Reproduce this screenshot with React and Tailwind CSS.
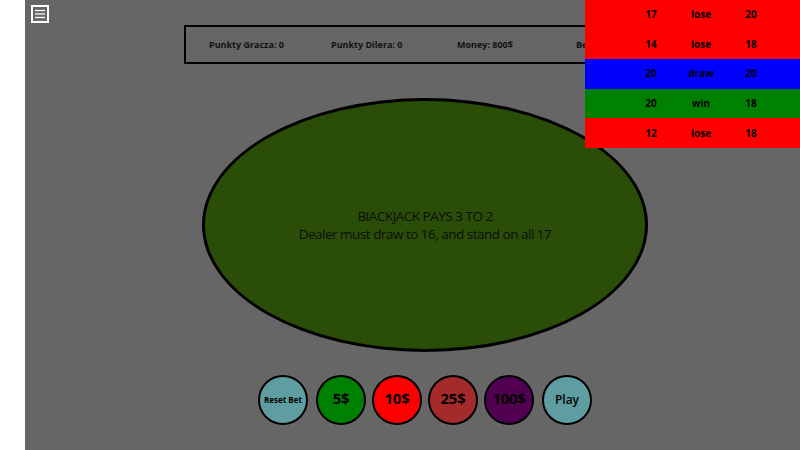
import React from "react";

const history = [
  { p: 17, r: "lose", d: 20, bg: "bg-[#ff0000]" },
  { p: 14, r: "lose", d: 18, bg: "bg-[#ff0000]" },
  { p: 20, r: "draw", d: 20, bg: "bg-[#0000ff]" },
  { p: 20, r: "win", d: 18, bg: "bg-[#008000]" },
  { p: 12, r: "lose", d: 18, bg: "bg-[#ff0000]" },
];

const chips = [
  { label: "5$", bg: "bg-[#008000]" },
  { label: "10$", bg: "bg-[#ff0000]" },
  { label: "25$", bg: "bg-[#a52a2a]" },
  { label: "100$", bg: "bg-[#520052]" },
];

const App = () => {
  return (
    <div
      className="flex w-[800px] h-[450px] overflow-hidden bg-white"
      style={{ fontFamily: '"Open Sans", "Noto Sans", sans-serif' }}
    >
      <div className="w-[25px] shrink-0 bg-white" />

      <main className="relative flex-1 h-full bg-[#666666]">
        {/* Menu */}
        <div className="pt-[5px] pl-[6px]">
          <svg width="18" height="18" viewBox="0 0 18 18">
            <rect x="1" y="1" width="16" height="16" fill="none" stroke="#fff" strokeWidth="2" />
            <line x1="4" y1="5.5" x2="14" y2="5.5" stroke="#fff" strokeWidth="1.3" />
            <line x1="4" y1="9" x2="14" y2="9" stroke="#fff" strokeWidth="1.3" />
            <line x1="4" y1="12.5" x2="14" y2="12.5" stroke="#fff" strokeWidth="1.3" />
          </svg>
        </div>

        <div className="flex flex-col items-center pl-[25px]">
          {/* Score bar */}
          <div className="mt-[2px] w-[482px] h-[39px] border-2 border-black flex items-center pl-[23px] text-[9px] font-bold text-[#111] whitespace-nowrap">
            <span className="w-[122px]">Punkty Gracza: 0</span>
            <span className="w-[126px]">Punkty Dilera: 0</span>
            <span className="w-[119px]">Money: 800$</span>
            <span>Bet: 0$</span>
          </div>

          {/* Table */}
          <div className="mt-[34px] w-[446px] h-[254px] rounded-[50%] border-[3px] border-black bg-[#2a4d07] flex flex-col items-center justify-center text-[13.5px] leading-[18px] tracking-[-0.5px] text-[#0d0d0d]">
            <span>BIACKJACK PAYS 3 TO 2</span>
            <span>Dealer must draw to 16, and stand on all 17</span>
          </div>

          {/* Chips */}
          <div className="mt-[23px] flex items-center">
            <button className="w-[50px] h-[50px] rounded-full border-2 border-black bg-[#5f9ea0] text-[8px] font-bold text-black">
              Reset Bet
            </button>
            <div className="ml-[8px] flex gap-[6px]">
              {chips.map((c) => (
                <button
                  key={c.label}
                  className={`w-[50px] h-[50px] pb-[3px] rounded-full border-2 border-black ${c.bg} text-[15px] font-bold tracking-[-0.3px] text-black`}
                >
                  {c.label}
                </button>
              ))}
            </div>
            <button className="ml-[8px] w-[50px] h-[50px] rounded-full border-2 border-black bg-[#5f9ea0] text-[12px] font-semibold text-black">
              Play
            </button>
          </div>
        </div>

        {/* History */}
        <div className="absolute top-0 right-0 w-[215px]">
          {history.map((h, i) => (
            <div
              key={i}
              className={`${h.bg} h-[29.6px] flex items-center pl-[41px] text-[10px] font-bold text-black`}
            >
              <span className="w-[50px] text-center">{h.p}</span>
              <span className="w-[50px] text-center">{h.r}</span>
              <span className="w-[50px] text-center">{h.d}</span>
            </div>
          ))}
        </div>
      </main>
    </div>
  );
};

export default App;
